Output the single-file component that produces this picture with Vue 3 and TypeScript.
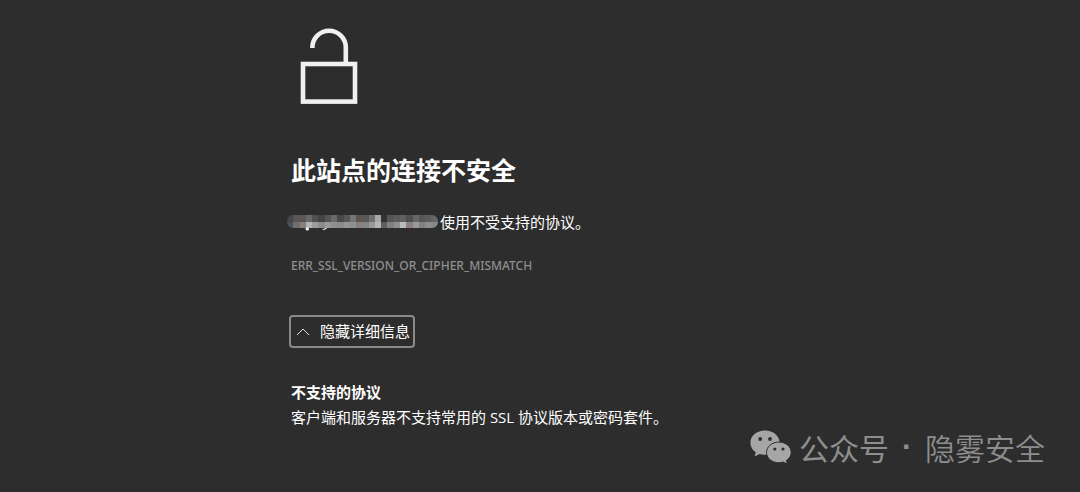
<script setup lang="ts">
import { ref } from 'vue'

const expanded = ref(true)

const maskTop: string[] = [
  '#44464b', '#5a5656', '#5a5656', '#66686c', '#505050', '#444444', '#555555', '#6a6a6a',
  '#484848', '#565656', '#767676', '#5c5650', '#585858', '#707070', '#a8a8a8', '#333333',
  '#555555', '#5b5b5b', '#606060', '#4f4f4f', '#666666', '#565656', '#5c5c5c', '#666666',
]
const maskBottom: string[] = [
  '#4a4f5a', '#6f6f6f', '#8a7f78', '#b0b5bc', '#a09c9a', '#8c8c8c', '#999999', '#8f8f8f',
  '#8a8a8a', '#959595', '#8c9090', '#888078', '#858585', '#999999', '#b5b5b5', '#5f5f5f',
  '#808080', '#8f8f8f', '#b8bcbc', '#8c8080', '#999999', '#808080', '#8f8c88', '#888888',
]
const cell = 6.28
</script>

<template>
  <div class="page">
    <main class="content">
      <svg class="lock" viewBox="0 0 76 76" fill="none" aria-hidden="true">
        <rect x="12" y="36" width="52" height="37.6" />
        <path d="M21.4 20V19.400a16.700 16.700 0 0 1 33.400 0V36" />
      </svg>

      <h1>此站点的连接不安全</h1>

      <p class="summary">
        <svg class="mask" viewBox="0 0 153 18" aria-hidden="true">
          <defs>
            <clipPath id="pill"><rect y="2" width="151" height="13" rx="6" /></clipPath>
          </defs>
          <g clip-path="url(#pill)" shape-rendering="crispEdges">
            <rect v-for="(c, i) in maskTop" :key="'t' + i" :x="i * cell" y="2" width="7" height="7" :fill="c" />
            <rect v-for="(c, i) in maskBottom" :key="'b' + i" :x="i * cell" y="9" width="7" height="6" :fill="c" />
          </g>
          <path d="M19 15h2.500v2H19zM35.500 16.500q3.500 .4 4.500-1.900" fill="#eee" stroke="#eee" stroke-width=".8" />
        </svg>
        <span>使用不受支持的协议。</span>
      </p>

      <p class="code">ERR_SSL_VERSION_OR_CIPHER_MISMATCH</p>

      <button class="toggle" type="button" :aria-expanded="expanded" aria-controls="details" @click="expanded = !expanded">
        <svg class="chevron" :class="{ closed: !expanded }" viewBox="0 0 14 8" fill="none" aria-hidden="true">
          <path d="M1 7l6-6 6 6" />
        </svg>
        <span>{{ expanded ? '隐藏详细信息' : '详细信息' }}</span>
      </button>

      <section v-show="expanded" id="details" class="details">
        <h2>不支持的协议</h2>
        <p>客户端和服务器不支持常用的 SSL 协议版本或密码套件。</p>
      </section>
    </main>

    <div class="watermark">
      <svg class="wechat" viewBox="0 0 42 34" aria-hidden="true">
        <path class="bubble" d="M15 .5C6.800 .5.400 5.900.400 12.700c0 3.900 2 7.300 5.400 9.600L4.600 26.500l5-2.500c1.700.5 3.500.8 5.400.8 8.200 0 14.600-5.400 14.600-12.100S23.200.5 15 .5z" />
        <path class="bubble front" d="M28.800 12.100c-6.900 0-12.300 4.500-12.300 10.300s5.400 10.300 12.300 10.300c1.500 0 3-.2 4.400-.7l4.200 2-1-3.500c2.900-1.900 4.800-4.800 4.800-8.100 0-5.800-5.500-10.300-12.400-10.300z" />
        <g class="eyes">
          <circle cx="10.200" cy="9" r="1.900" /><circle cx="20" cy="9" r="1.900" />
          <circle cx="24.800" cy="19" r="1.600" /><circle cx="33" cy="19" r="1.600" />
        </g>
      </svg>
      <span class="kind">公众号</span>
      <span class="dot">·</span>
      <span class="name">隐雾安全</span>
    </div>
  </div>
</template>

<style>
body {
  background: #2d2d2d;
}
</style>

<style scoped>
.page {
  position: relative;
  box-sizing: border-box;
  min-height: 100vh;
  padding: 28px 16px;
  background: #2d2d2d;
  color: #fff;
  font-family: "Open Sans", "Noto Sans CJK SC", sans-serif;
  font-size: 15px;
  line-height: 24px;
}
.content {
  max-width: 498px;
  margin: 0 auto;
}
.lock {
  display: block;
  width: 76px;
  height: 76px;
  stroke: #f0f0f0;
  stroke-width: 4.6;
}
h1 {
  margin: 48px 0 0;
  font-size: 25px;
  line-height: 36px;
  font-weight: 700;
}
.summary {
  display: flex;
  align-items: center;
  margin: 22px 0 0 -4px;
}
.mask {
  flex: none;
  width: 153px;
  height: 18px;
}
.code {
  margin: 20px 0 0;
  color: #8f8f8f;
  font-family: "Noto Sans", sans-serif;
  font-size: 12px;
  font-weight: 500;
}
.toggle {
  display: flex;
  align-items: center;
  gap: 10px;
  margin: 37px 0 0 -2px;
  padding: 3px 3px 3px 5px;
  border: 2px solid #8a8a8a;
  border-radius: 4px;
  background: transparent;
  color: #fff;
  font: inherit;
  line-height: 23px;
  cursor: pointer;
}
.chevron {
  width: 14px;
  height: 8px;
  stroke: #e0e0e0;
  stroke-width: 1;
}
.chevron.closed {
  transform: rotate(180deg);
}
.details {
  margin-top: 32px;
}
.details h2 {
  margin: 0;
  font-size: 15px;
  line-height: 25px;
  font-weight: 700;
}
.details p {
  margin: 0;
}
.watermark {
  position: absolute;
  right: 35px;
  bottom: 25px;
  display: flex;
  align-items: center;
  color: #8e8e8e;
  font-family: "Noto Sans CJK SC", sans-serif;
  font-size: 30px;
  line-height: 40px;
}
.wechat {
  width: 42px;
  height: 34px;
  margin-right: 7px;
}
.bubble {
  fill: #a6a6a6;
}
.front {
  stroke: #2d2d2d;
  stroke-width: 1;
}
.eyes {
  fill: #2d2d2d;
}
.kind {
  font-weight: 400;
}
.dot {
  width: 36px;
  text-align: center;
  font-family: "Liberation Sans", sans-serif;
  font-weight: 700;
}
.name {
  font-weight: 350;
}
</style>
